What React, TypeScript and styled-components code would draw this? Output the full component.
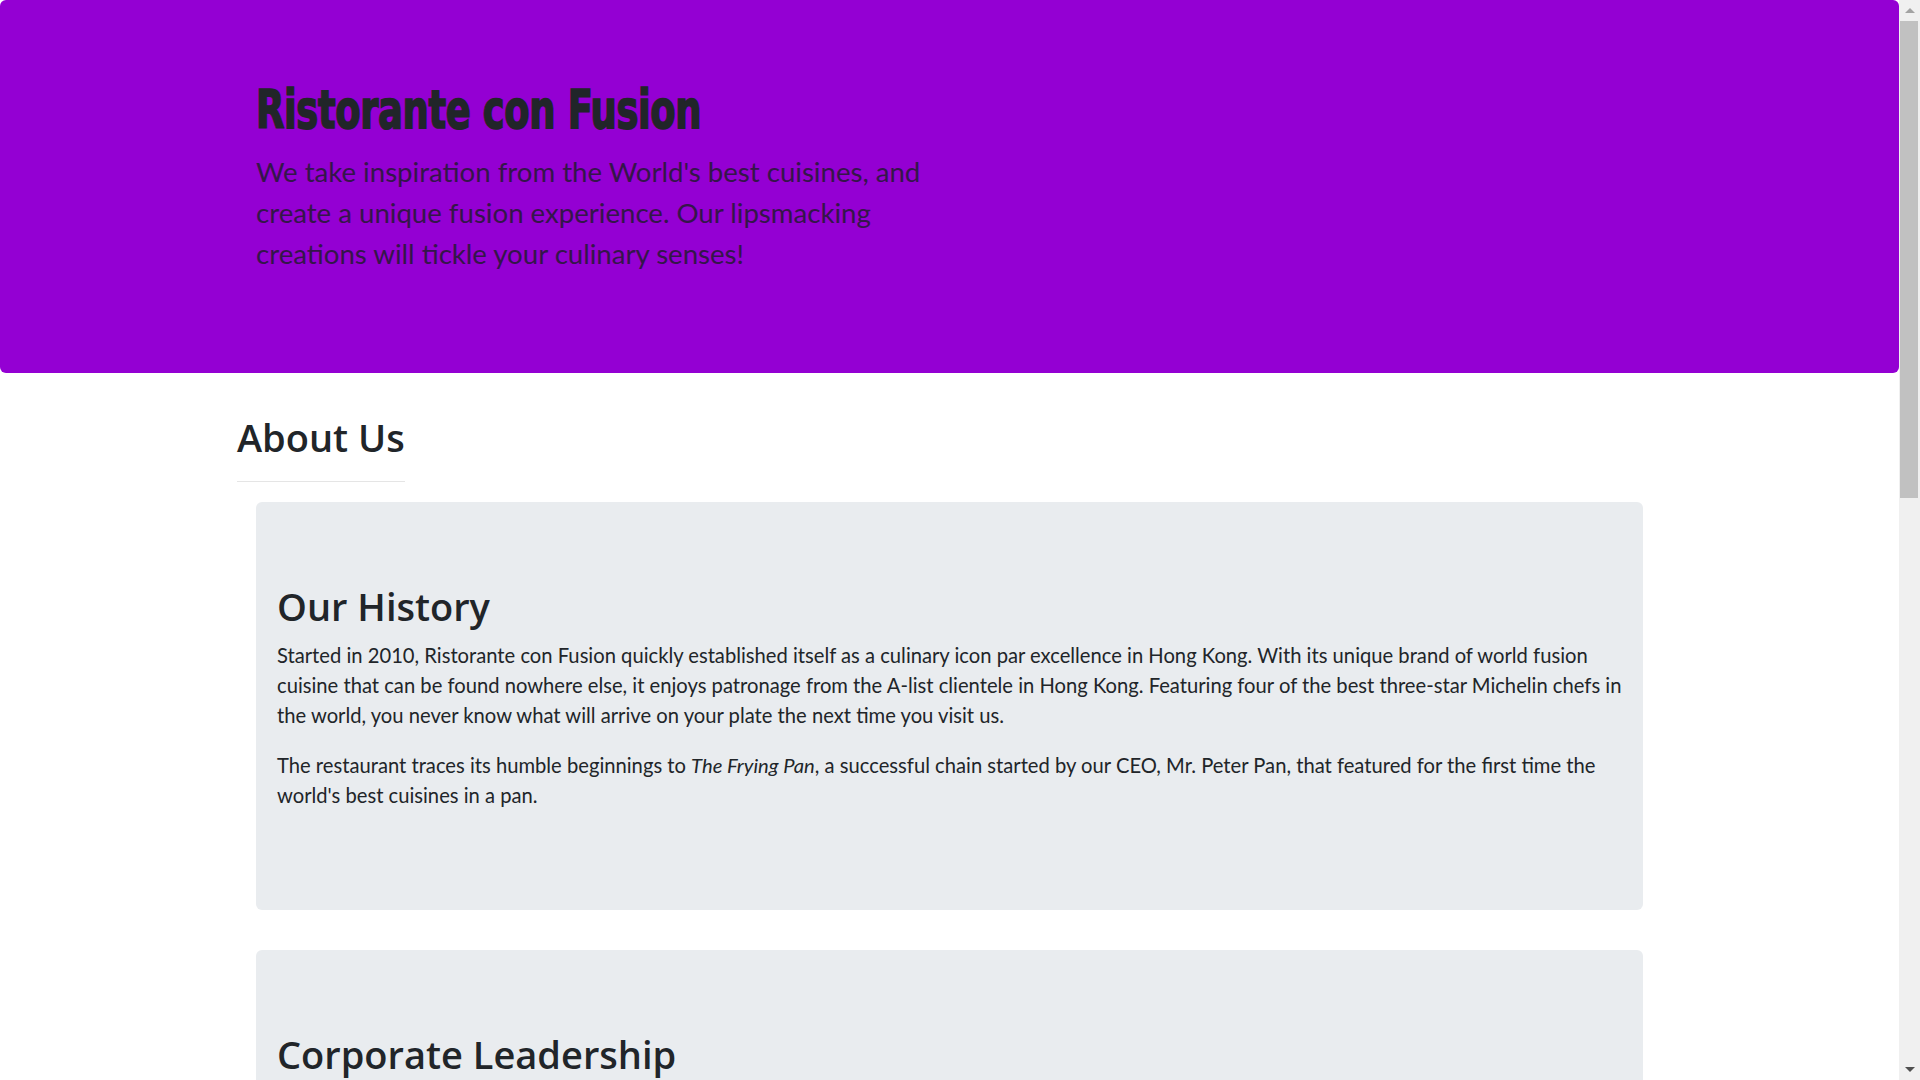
import React from "react";
import styled, { createGlobalStyle } from "styled-components";

const GlobalStyle = createGlobalStyle`
  html, body { margin: 0; padding: 0; }
  body {
    font-family: Lato, "Open Sans", "Noto Sans", sans-serif;
    color: #212529;
    background: #ffffff;
  }
  *, *::before, *::after { box-sizing: border-box; }
`;

const Page = styled.div`
  margin-right: 21px;
`;

const Jumbotron = styled.header`
  background: #9400d3;
  border-radius: 6px;
  padding: 80px 0;
`;

const Container = styled.div`
  width: 1425px;
  margin: 0 auto;
`;

const HeroCol = styled.div`
  padding: 0 19px;
  width: 712px;
`;

const Title = styled.h1`
  margin: 0 0 11px;
  font-family: "DejaVu Sans Condensed", "DejaVu Sans", "Liberation Sans", sans-serif;
  font-weight: 700;
  font-size: 54px;
  line-height: 60px;
  letter-spacing: -0.5px;
  color: #212529;
  -webkit-text-stroke: 1.6px #212529;
  transform: scaleX(0.76);
  transform-origin: left center;
  white-space: nowrap;
`;

const Lead = styled.p`
  margin: 0 0 19px;
  font-size: 27.6px;
  line-height: 41px;
  font-weight: 400;
  color: #34164a;
`;

const Main = styled(Container)`
  padding-top: 40px;
`;

const HeadingBlock = styled.div`
  display: inline-block;
`;

const SectionTitle = styled.h2`
  margin: 0 0 10px;
  font-family: "Open Sans", Lato, sans-serif;
  font-weight: 600;
  font-size: 38px;
  line-height: 48px;
  color: #212529;
`;

const Rule = styled.hr`
  margin: 20px 0 17px;
  border: 0;
  border-top: 1px solid rgba(0, 0, 0, 0.1);
`;

const Card = styled.section`
  margin: 0 19px 40px;
  padding: 80px 20px 80px 21px;
  background: #e9ecef;
  border-radius: 6px;
`;

const CardTitle = styled(SectionTitle)``;

const Text = styled.p`
  margin: 0 0 20px;
  font-size: 20.2px;
  line-height: 30px;
  color: #212529;
`;

const Leader = styled.div`
  margin-bottom: 30px;
`;

const LeaderName = styled.h3`
  margin: 0 0 6px;
  font-family: "Open Sans", Lato, sans-serif;
  font-weight: 600;
  font-size: 25px;
  line-height: 30px;
`;

const LeaderRole = styled.p`
  margin: 0 0 10px;
  font-size: 20px;
  line-height: 30px;
  font-weight: 700;
`;

const Footer = styled.footer`
  background: #d1c4e9;
  padding: 40px 0;
  height: 420px;
`;

const FooterText = styled.p`
  margin: 0 19px;
  font-size: 20px;
  line-height: 30px;
`;

/* Fake classic scrollbar that lies over the page's right edge */
const ScrollBar = styled.aside`
  position: fixed;
  top: 0;
  right: 0;
  width: 21px;
  height: 100vh;
  background: #f0f0f0;
  display: flex;
  flex-direction: column;
`;

const ArrowButton = styled.div<{ $down?: boolean; $color: string }>`
  height: 21px;
  flex: none;
  display: flex;
  align-items: center;
  justify-content: center;
  &::before {
    content: "";
    width: 0;
    height: 0;
    border-left: 5px solid transparent;
    border-right: 5px solid transparent;
    ${(p) =>
      p.$down
        ? `border-top: 5px solid ${p.$color};`
        : `border-bottom: 5px solid ${p.$color};`}
  }
`;

const Track = styled.div`
  flex: 1;
  padding: 0 2px 0 1px;
`;

const Thumb = styled.div`
  height: 477px;
  background: #c1c1c1;
`;

const leaders = [
  {
    name: "Peter Pan",
    role: "Chief Epicurious Officer",
    text: "Our CEO, Peter, credits his hardworking East Asian immigrant parents who undertook the arduous journey to the shores of America with the intention of giving their children the best future.",
  },
  {
    name: "Dhanasekaran Witherspoon",
    role: "Chief Food Officer",
    text: "Our CFO, Danny, as he is affectionately referred to by his colleagues, comes from a long established family tradition in farming and produce.",
  },
  {
    name: "Agumbe Tang",
    role: "Chief Taste Officer",
    text: "Blessed with the most discerning gustatory sense, Agumbe, our CTO, personally ensures that every dish that we serve meets his exacting tastes.",
  },
  {
    name: "Alberto Somayya",
    role: "Executive Chef",
    text: "Award winning three-star Michelin chef with wide International experience having worked closely with whos-who in the culinary world.",
  },
];

export default function App() {
  return (
    <>
      <GlobalStyle />
      <Page>
        <Jumbotron>
          <Container>
            <HeroCol>
              <Title>Ristorante con Fusion</Title>
              <Lead>
                We take inspiration from the World's best cuisines, and
                <br />
                create a unique fusion experience. Our lipsmacking
                <br />
                creations will tickle your culinary senses!
              </Lead>
            </HeroCol>
          </Container>
        </Jumbotron>
        <Main>
          <HeadingBlock>
            <SectionTitle>About Us</SectionTitle>
            <Rule />
          </HeadingBlock>
          <Card>
            <CardTitle>Our History</CardTitle>
            <Text>
              Started in 2010, Ristorante con Fusion quickly established itself as a culinary icon par excellence in Hong Kong. With its unique brand of world fusion
              <br />
              cuisine that can be found nowhere else, it enjoys patronage from the A-list clientele in Hong Kong. Featuring four of the best three-star Michelin chefs in
              <br />
              the world, you never know what will arrive on your plate the next time you visit us.
            </Text>
            <Text>
              The restaurant traces its humble beginnings to <em>The Frying Pan</em>, a successful chain started by our CEO, Mr. Peter Pan, that featured for the first time the
              <br />
              world's best cuisines in a pan.
            </Text>
          </Card>
          <Card>
            <CardTitle>Corporate Leadership</CardTitle>
            {leaders.map((l) => (
              <Leader key={l.name}>
                <LeaderName>{l.name}</LeaderName>
                <LeaderRole>{l.role}</LeaderRole>
                <Text>{l.text}</Text>
              </Leader>
            ))}
          </Card>
        </Main>
        <Footer>
          <Container>
            <FooterText>© Copyright 2018 Ristorante Con Fusion</FooterText>
          </Container>
        </Footer>
      </Page>
      <ScrollBar aria-hidden="true">
        <ArrowButton $color="#a3a3a3" />
        <Track>
          <Thumb />
        </Track>
        <ArrowButton $down $color="#505050" />
      </ScrollBar>
    </>
  );
}
